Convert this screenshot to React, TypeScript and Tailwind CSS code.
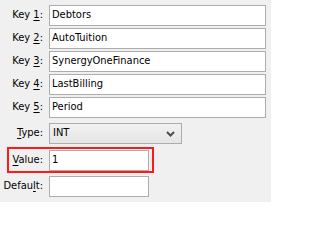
import React from "react";

const font = { fontFamily: '"DejaVu Sans Condensed", Tahoma, "DejaVu Sans", sans-serif' };

function Label({ pre, u, post, className = "" }: { pre: string; u: string; post: string; className?: string }) {
  return (
    <span className={`shrink-0 text-right text-[11px] text-black ${className}`}>
      {pre}
      <span className="underline underline-offset-2">{u}</span>
      {post}
    </span>
  );
}

function TextBox({ value, className = "" }: { value: string; className?: string }) {
  return (
    <div className={`flex h-[21px] items-center border border-[#adadad] bg-white pl-[2px] text-[11px] text-black ${className}`}>
      {value}
    </div>
  );
}

const keys = ["Debtors", "AutoTuition", "SynergyOneFinance", "LastBilling", "Period"];

export default function App() {
  return (
    <div className="h-[202px] w-[271px] bg-[#f0f0f0] pt-[5px]" style={font}>
      <div className="flex flex-col gap-[2px]">
        {keys.map((k, i) => (
          <div key={k} className="flex items-center gap-[6px]">
            <Label className="w-[43px]" pre="Key " u={String(i + 1)} post=":" />
            <TextBox value={k} className="w-[217px]" />
          </div>
        ))}
      </div>

      <div className="mt-[5px] flex items-center gap-[6px]">
        <Label className="w-[43px]" pre="" u="T" post="ype:" />
        <div className="flex h-[21px] w-[133px] items-center justify-between border border-[#acacac] bg-gradient-to-b from-[#f2f2f2] to-[#e5e5e5] pl-[3px] pr-[6px] text-[11px] text-black">
          <span>INT</span>
          <svg width="9" height="6" viewBox="0 0 9 6">
            <path d="M1 1 L4.5 4.5 L8 1" stroke="#4d4d4d" strokeWidth="2" fill="none" />
          </svg>
        </div>
      </div>

      <div className="mt-[3px] ml-[7px] flex h-[26px] w-[147px] items-center gap-[6px] border-2 border-[#ff1a1a]">
        <Label className="w-[34px]" pre="" u="V" post="alue:" />
        <TextBox value="1" className="w-[100px]" />
      </div>

      <div className="mt-[3px] flex items-center gap-[6px]">
        <Label className="w-[43px]" pre="Defau" u="l" post="t:" />
        <TextBox value="" className="w-[100px]" />
      </div>
    </div>
  );
}
